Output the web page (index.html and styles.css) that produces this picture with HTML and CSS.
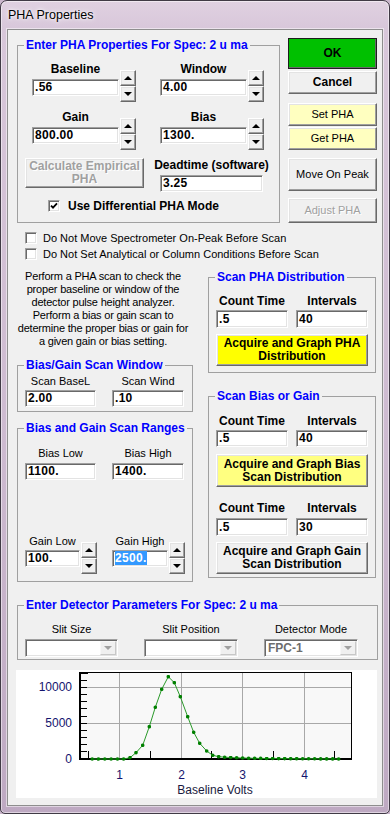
FILE: index.html
```html
<!DOCTYPE html>
<html>
<head>
	<meta charset="UTF-8">
	<title>PHA Properties</title>
	<link rel="stylesheet" href="styles.css">
</head>
<body>
<div class="window">
	<div class="titlebar">PHA Properties</div>
	<div class="client">

		<div class="top">
			<fieldset class="group pha">
				<legend>Enter PHA Properties For Spec: 2 u ma</legend>
				<div class="spinrow">
					<div class="spinfield">
						<div class="fcol w87">
							<div class="lbl b">Baseline</div>
							<div class="edit">.56</div>
						</div>
						<div class="spin"><span class="up"></span><span class="dn"></span></div>
					</div>
					<div class="spinfield">
						<div class="fcol w87">
							<div class="lbl b">Window</div>
							<div class="edit">4.00</div>
						</div>
						<div class="spin"><span class="up"></span><span class="dn"></span></div>
					</div>
				</div>
				<div class="spinrow">
					<div class="spinfield">
						<div class="fcol w87">
							<div class="lbl b">Gain</div>
							<div class="edit">800.00</div>
						</div>
						<div class="spin"><span class="up"></span><span class="dn"></span></div>
					</div>
					<div class="spinfield">
						<div class="fcol w87">
							<div class="lbl b">Bias</div>
							<div class="edit">1300.</div>
						</div>
						<div class="spin"><span class="up"></span><span class="dn"></span></div>
					</div>
				</div>
				<div class="calcrow">
					<button class="btn off calc">Calculate Empirical<br>PHA</button>
					<div class="fcol dead">
						<div class="lbl b">Deadtime (software)</div>
						<div class="edit">3.25</div>
					</div>
				</div>
				<label class="check b diff">
					<span class="box"><svg width="8" height="8" viewBox="0 0 8 8"><path d="M1 3.6 L3 5.6 L7 1.4" fill="none" stroke="#000" stroke-width="1.8"/></svg></span>Use Differential PHA Mode
				</label>
			</fieldset>

			<div class="side">
				<button class="btn ok">OK</button>
				<button class="btn cancel">Cancel</button>
				<button class="btn pale setpha">Set PHA</button>
				<button class="btn pale getpha">Get PHA</button>
				<button class="btn move">Move On Peak</button>
				<button class="btn off adjust">Adjust PHA</button>
			</div>
		</div>

		<div class="checks">
			<label class="check"><span class="box"></span>Do Not Move Spectrometer On-Peak Before Scan</label>
			<label class="check"><span class="box"></span>Do Not Set Analytical or Column Conditions Before Scan</label>
		</div>

		<div class="mid">
			<div class="leftcol">
				<p class="desc">Perform a PHA scan to check the<br>proper baseline or window of the<br>detector pulse height analyzer.<br>Perform a bias or gain scan to<br>determine the proper bias or gain for<br>a given gain or bias setting.</p>

				<fieldset class="group scanwin">
					<legend>Bias/Gain Scan Window</legend>
					<div class="pair">
						<div class="fcol w71">
							<div class="lbl">Scan BaseL</div>
							<div class="edit">2.00</div>
						</div>
						<div class="fcol w72">
							<div class="lbl">Scan Wind</div>
							<div class="edit">.10</div>
						</div>
					</div>
				</fieldset>

				<fieldset class="group ranges">
					<legend>Bias and Gain Scan Ranges</legend>
					<div class="pair">
						<div class="fcol w71">
							<div class="lbl">Bias Low</div>
							<div class="edit">1100.</div>
						</div>
						<div class="fcol w72">
							<div class="lbl">Bias High</div>
							<div class="edit">1400.</div>
						</div>
					</div>
					<div class="gainrow">
						<div class="spinfield">
							<div class="fcol w55">
								<div class="lbl">Gain Low</div>
								<div class="edit">100.</div>
							</div>
							<div class="spin"><span class="up"></span><span class="dn"></span></div>
						</div>
						<div class="spinfield">
							<div class="fcol w56">
								<div class="lbl">Gain High</div>
								<div class="edit"><span class="sel">2500.</span></div>
							</div>
							<div class="spin"><span class="up"></span><span class="dn"></span></div>
						</div>
					</div>
				</fieldset>
			</div>

			<div class="rightcol">
				<fieldset class="group scanpha">
					<legend>Scan PHA Distribution</legend>
					<div class="pair tight">
						<div class="fcol w72">
							<div class="lbl b">Count Time</div>
							<div class="edit h18">.5</div>
						</div>
						<div class="fcol w72">
							<div class="lbl b">Intervals</div>
							<div class="edit h18">40</div>
						</div>
					</div>
					<button class="btn acq yellow">Acquire and Graph PHA<br>Distribution</button>
				</fieldset>

				<fieldset class="group biasgain">
					<legend>Scan Bias or Gain</legend>
					<div class="pair tight first">
						<div class="fcol w72">
							<div class="lbl b">Count Time</div>
							<div class="edit">.5</div>
						</div>
						<div class="fcol w72">
							<div class="lbl b">Intervals</div>
							<div class="edit">40</div>
						</div>
					</div>
					<button class="btn acq lemon">Acquire and Graph Bias<br>Scan Distribution</button>
					<div class="pair tight second">
						<div class="fcol w72">
							<div class="lbl b">Count Time</div>
							<div class="edit h18">.5</div>
						</div>
						<div class="fcol w72">
							<div class="lbl b">Intervals</div>
							<div class="edit h18">30</div>
						</div>
					</div>
					<button class="btn acq gaing">Acquire and Graph Gain<br>Scan Distribution</button>
				</fieldset>
			</div>
		</div>

		<fieldset class="group det">
			<legend>Enter Detector Parameters For Spec: 2 u ma</legend>
			<div class="combos">
				<div class="fcol w93">
					<div class="lbl">Slit Size</div>
					<div class="combo"><span class="val"></span><span class="arrow"></span></div>
				</div>
				<div class="fcol w94">
					<div class="lbl">Slit Position</div>
					<div class="combo"><span class="val"></span><span class="arrow"></span></div>
				</div>
				<div class="fcol w94">
					<div class="lbl">Detector Mode</div>
					<div class="combo"><span class="val">FPC-1</span><span class="arrow"></span></div>
				</div>
			</div>
		</fieldset>

		<div class="chart">
			<svg width="361" height="128" viewBox="0 0 361 128">
				<defs>
					<marker id="dot" viewBox="0 0 4 4" refX="2" refY="2" markerWidth="4" markerHeight="4" markerUnits="userSpaceOnUse">
						<circle cx="2" cy="2" r="1.8" fill="#008000"/>
					</marker>
				</defs>
				<rect x="64.5" y="2.5" width="271" height="87" fill="#f8f8f8" stroke="#000"/>
				<g stroke="#a8a8a8" stroke-width="1">
					<line x1="103.5" y1="3" x2="103.5" y2="89"/>
					<line x1="165.5" y1="3" x2="165.5" y2="89"/>
					<line x1="226.5" y1="3" x2="226.5" y2="89"/>
					<line x1="288.5" y1="3" x2="288.5" y2="89"/>
					<line x1="65" y1="17.5" x2="335" y2="17.5"/>
					<line x1="65" y1="53.5" x2="335" y2="53.5"/>
				</g>
				<g stroke="#000" stroke-width="1">
					<line x1="65" y1="81.5" x2="71" y2="81.5"/>
					<line x1="65" y1="74.5" x2="71" y2="74.5"/>
					<line x1="65" y1="67.5" x2="71" y2="67.5"/>
					<line x1="65" y1="60.5" x2="71" y2="60.5"/>
					<line x1="65" y1="53.5" x2="71" y2="53.5"/>
					<line x1="65" y1="46.5" x2="71" y2="46.5"/>
					<line x1="65" y1="38.5" x2="71" y2="38.5"/>
					<line x1="65" y1="31.5" x2="71" y2="31.5"/>
					<line x1="65" y1="24.5" x2="71" y2="24.5"/>
					<line x1="65" y1="17.5" x2="71" y2="17.5"/>
					<line x1="65" y1="10.5" x2="71" y2="10.5"/>
					<line x1="65" y1="3.5" x2="72" y2="3.5"/>
					<line x1="72.5" y1="81" x2="72.5" y2="89"/>
					<line x1="134.5" y1="81" x2="134.5" y2="89"/>
					<line x1="195.5" y1="81" x2="195.5" y2="89"/>
					<line x1="257.5" y1="81" x2="257.5" y2="89"/>
					<line x1="318.5" y1="81" x2="318.5" y2="89"/>
				</g>
				<line x1="64" y1="89" x2="336" y2="89" stroke="#000" stroke-width="2"/>
				<line x1="64" y1="2" x2="64" y2="90" stroke="#000" stroke-width="2"/>
				<polyline fill="none" stroke="#2a9a2a" stroke-width="1" marker-start="url(#dot)" marker-mid="url(#dot)" marker-end="url(#dot)"
					points="76.2,89 82.5,89 88.8,89 95.1,89 101.4,89 107.7,89 114,87.7 120,82.7 126.7,75.3 133.3,56.7 139.3,37.3 145.7,19.3 152.3,6.7 158.3,12.7 164.3,26.7 171.7,46.7 177.7,62.3 183.7,73.3 190.7,81 196.7,85.3 202.7,86.7 208.7,87.2 214.7,87.5 220.7,87.8 226.7,88 232.7,88.2 238.7,88.3 244.7,88.4 250.7,88.5 256.7,88.5 262.7,88.6 268.7,88.6 274.7,88.7 280.7,88.7 286.7,88.8 292.7,88.8 298.7,88.8 304.7,88.9 310.7,88.9 316.7,88.9 322.7,89"/>
				<g class="axis" text-anchor="end">
					<text x="56" y="21">10000</text>
					<text x="56" y="57">5000</text>
					<text x="56" y="93">0</text>
				</g>
				<g class="axis" text-anchor="middle">
					<text x="103.5" y="109">1</text>
					<text x="165.5" y="109">2</text>
					<text x="226.5" y="109">3</text>
					<text x="288.5" y="109">4</text>
				</g>
				<text class="axtitle" x="199" y="124" text-anchor="middle">Baseline Volts</text>
			</svg>
		</div>

	</div>
</div>
</body>
</html>
```

FILE: styles.css
```css
* {
	box-sizing: border-box;
}
body {
	margin: 0;
	background: #cbb7cd;
	font-family: "Liberation Sans", Arial, sans-serif;
	font-size: 11px;
	color: #000;
}

/* window frame */
.window {
	width: 390px;
	height: 814px;
	border: 1px solid #403a45;
	border-radius: 7px 7px 5px 5px;
	background: linear-gradient(180deg, #e0d1e1 0px, #d8c7da 28px, #cdbad0 55%, #bea9c2 100%);
	box-shadow: inset 0 0 0 1px rgba(255,255,255,0.5);
	overflow: hidden;
}
.titlebar {
	height: 28px;
	line-height: 28px;
	padding-left: 7px;
	font-size: 12.5px;
	text-shadow: 0 0 6px #fff, 0 0 3px #fff;
}
.client {
	width: 376px;
	height: 777px;
	margin-left: 6px;
	background: #f0f0f0;
	border: 1px solid #8e8e8e;
	box-shadow: 0 0 0 1px rgba(255,255,255,0.5);
}

/* group boxes */
.group {
	margin: 0;
	padding: 0;
	min-width: 0;
	border: 1px solid #a0a0a0;
}
.group legend {
	margin-left: 6px;
	padding: 0 2px;
	font-weight: bold;
	font-size: 12px;
	line-height: 14px;
	color: #0000ff;
	white-space: nowrap;
}

/* common controls */
.lbl {
	line-height: 14px;
	margin-bottom: 3px;
	white-space: nowrap;
}
.b {
	font-weight: bold;
	font-size: 12px;
}
.fcol {
	display: flex;
	flex-direction: column;
	align-items: center;
}
.fcol .edit,
.fcol .combo {
	align-self: stretch;
}
.w55 { width: 55px; }
.w56 { width: 56px; }
.w71 { width: 71px; }
.w72 { width: 72px; }
.w87 { width: 87px; }
.w93 { width: 93px; }
.w94 { width: 94px; }

.edit {
	height: 17px;
	padding: 0 2px;
	background: #fff;
	border: 1px solid;
	border-color: #a0a0a0 #fff #fff #a0a0a0;
	box-shadow: inset 1px 1px #696969, inset -1px -1px #e3e3e3;
	font-weight: bold;
	font-size: 12px;
	line-height: 15px;
	letter-spacing: 0.3px;
	white-space: nowrap;
}
.edit.h18 {
	height: 18px;
	line-height: 16px;
}
.sel {
	background: #3399ff;
	color: #fff;
}

.btn {
	display: block;
	width: 100%;
	padding: 0;
	font-family: inherit;
	font-size: 11px;
	line-height: 13px;
	color: #000;
	background: #f0f0f0;
	border: 1px solid;
	border-color: #fff #696969 #696969 #fff;
	box-shadow: inset -1px -1px #a0a0a0, inset 1px 1px #e3e3e3;
}
.btn.off {
	color: #a0a0a0;
	text-shadow: 1px 1px #fff;
}

.spinfield {
	display: flex;
	align-items: flex-start;
}
.spin {
	width: 16px;
	margin: 8px 0 0 1px;
}
.spin span {
	display: flex;
	align-items: center;
	justify-content: center;
	height: 16px;
	background: #f0f0f0;
	border: 1px solid;
	border-color: #fff #696969 #696969 #fff;
	box-shadow: inset -1px -1px #a0a0a0, inset 1px 1px #e3e3e3;
}
.spin .up::after {
	content: "";
	border: 4px solid transparent;
	border-top: 0;
	border-bottom: 4px solid #000;
}
.spin .dn::after {
	content: "";
	border: 4px solid transparent;
	border-bottom: 0;
	border-top: 4px solid #000;
}

.check {
	display: flex;
	align-items: center;
	white-space: nowrap;
}
.check .box {
	display: flex;
	align-items: center;
	justify-content: center;
	width: 12px;
	height: 12px;
	margin-right: 6px;
	background: #fff;
	border: 1px solid;
	border-color: #a0a0a0 #fff #fff #a0a0a0;
	box-shadow: inset 1px 1px #696969, inset -1px -1px #e3e3e3;
}

/* top section */
.top {
	display: flex;
	align-items: flex-start;
	margin-top: 8px;
	padding-left: 9px;
}
.pha {
	width: 263px;
	padding-bottom: 9px;
}
.spinrow {
	display: flex;
	gap: 24px;
	margin: 10px 0 0 14px;
}
.spinrow + .spinrow {
	margin-top: 8px;
}
.calcrow {
	display: flex;
	align-items: flex-start;
	margin: 8px 0 0 7px;
}
.calc {
	width: 119px;
	height: 30px;
	margin-right: 16px;
	font-weight: bold;
	font-size: 12px;
}
.dead {
	width: 103px;
}
.diff {
	height: 14px;
	margin: 7px 0 0 30px;
}
.diff .box {
	margin-right: 8px;
}

.side {
	display: flex;
	flex-direction: column;
	width: 89px;
	margin-left: 8px;
}
.ok {
	height: 31px;
	background: #00c000;
	border: 1px solid #1e1e1e;
	box-shadow: inset -1px -1px #696969;
	font-weight: bold;
	font-size: 12px;
}
.cancel {
	height: 23px;
	margin-top: 2px;
	font-weight: bold;
	font-size: 12px;
}
.pale {
	height: 23px;
	background: #ffffc0;
}
.setpha {
	margin-top: 9px;
}
.getpha {
	margin-top: 1px;
}
.move {
	height: 33px;
	margin-top: 8px;
}
.adjust {
	height: 25px;
	margin-top: 7px;
}

/* option checkboxes */
.checks {
	margin-top: 7px;
	padding-left: 17px;
}
.checks .check {
	height: 16px;
}

/* middle section */
.mid {
	display: flex;
	align-items: flex-start;
	margin-top: 8px;
	padding-left: 9px;
}
.leftcol {
	width: 176px;
}
.desc {
	margin: 0;
	padding-right: 4px;
	line-height: 13px;
	text-align: center;
	white-space: nowrap;
	letter-spacing: -0.2px;
}
.pair {
	display: flex;
	gap: 16px;
	margin: 2px 0 0 7px;
}
.pair .lbl {
	margin-bottom: 2px;
}
.scanwin {
	margin-top: 10px;
	padding-bottom: 4px;
}
.ranges {
	margin-top: 9px;
	padding-bottom: 7px;
}
.ranges .pair {
	margin-top: 11px;
}
.ranges .pair .lbl {
	margin-bottom: 3px;
}
.gainrow {
	display: flex;
	gap: 15px;
	margin: 54px 0 0 7px;
}
.gainrow .lbl {
	margin-bottom: 2px;
}

.rightcol {
	width: 168px;
	margin-left: 15px;
}
.pair.tight {
	gap: 8px;
	margin-top: 10px;
}
.acq {
	width: 152px;
	height: 32px;
	margin: 6px 0 0 7px;
	font-weight: bold;
	font-size: 12px;
	line-height: 13px;
}
.yellow {
	background: #ffff00;
}
.lemon {
	background: #ffff80;
	height: 33px;
	margin-top: 7px;
}
.scanpha {
	padding-bottom: 6px;
}
.biasgain {
	margin-top: 16px;
	padding-bottom: 3px;
}
.biasgain .first {
	margin-top: 11px;
}
.biasgain .second {
	margin-top: 14px;
}
.biasgain .second .lbl {
	margin-bottom: 3px;
}

/* detector parameters */
.det {
	width: 361px;
	margin: 16px 0 0 9px;
	padding-bottom: 2px;
}
.combos {
	display: flex;
	gap: 26px;
	margin: 10px 0 0 7px;
}
.combo {
	display: flex;
	justify-content: space-between;
	height: 18px;
	padding: 1px;
	background: #fff;
	border: 1px solid;
	border-color: #a0a0a0 #fff #fff #a0a0a0;
	box-shadow: inset 1px 1px #696969, inset -1px -1px #e3e3e3;
}
.combo .val {
	padding-left: 2px;
	font-weight: bold;
	font-size: 12px;
	line-height: 14px;
	color: #6d6d6d;
}
.combo .arrow {
	display: flex;
	align-items: center;
	justify-content: center;
	width: 16px;
	background: #f0f0f0;
	border: 1px solid;
	border-color: #f8f8f8 #c8c8c8 #c8c8c8 #f8f8f8;
}
.combo .arrow::after {
	content: "";
	border: 4px solid transparent;
	border-bottom: 0;
	border-top: 4px solid #a0a0a0;
}

/* chart */
.chart {
	width: 361px;
	height: 128px;
	margin: 10px 0 0 8px;
	background: #fff;
}
.chart svg {
	display: block;
}
.axis {
	font-family: "Liberation Sans", Arial, sans-serif;
	font-size: 12px;
	fill: #14146e;
}
.axtitle {
	font-family: "Liberation Sans", Arial, sans-serif;
	font-size: 12px;
	fill: #1a1a40;
}
```
